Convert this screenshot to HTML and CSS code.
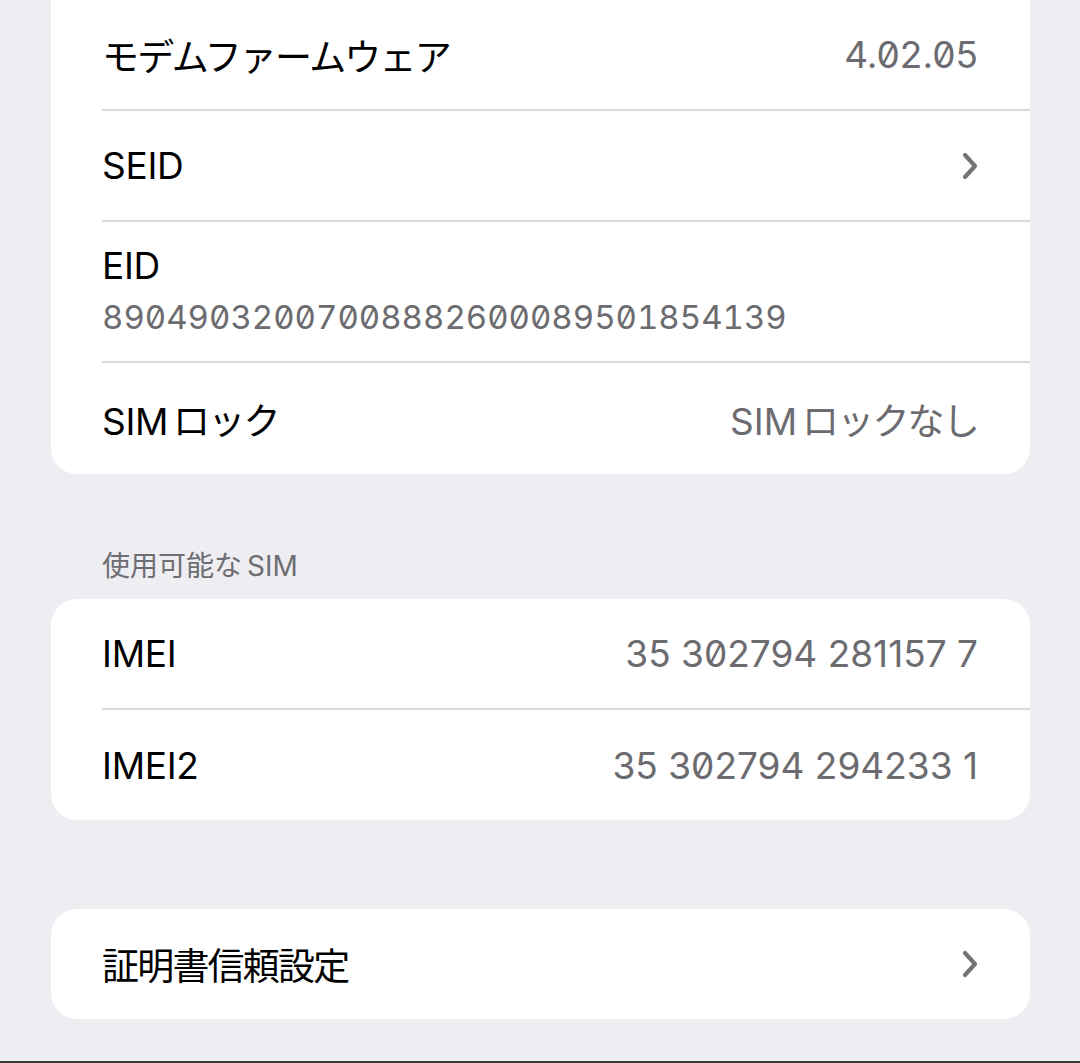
FILE: index.html
```html
<!DOCTYPE HTML>
<html>
	<head>
		<meta charset="utf-8">
		<title>
			情報
		</title>
		<meta name="viewport" content="width=device-width, initial-scale=1.0">
		<link rel="stylesheet" href="styles.css">
	</head>
	<body>
		<div class="group cut">
			<div class="row">
				<span class="label ja">モデムファームウェア</span>
				<span class="value">4.02.05</span>
			</div>
			<div class="row">
				<span class="label">SEID</span>
				<svg class="chev" width="16" height="28" viewBox="0 0 16 28"><path d="M3 3 L13 14 L3 25"/></svg>
			</div>
			<div class="row tall">
				<div class="stack">
					<span class="label">EID</span>
					<span class="sub">89049032007008882600089501854139</span>
				</div>
			</div>
			<div class="row">
				<span class="label">SIM<span class="ja">&thinsp;ロック</span></span>
				<span class="value">SIM<span class="ja">&thinsp;ロックなし</span></span>
			</div>
		</div>

		<div class="sectionTitle">使用可能な&thinsp;SIM</div>
		<div class="group">
			<div class="row">
				<span class="label">IMEI</span>
				<span class="value">35 302794 281157 7</span>
			</div>
			<div class="row">
				<span class="label">IMEI2</span>
				<span class="value">35 302794 294233 1</span>
			</div>
		</div>

		<div class="group lone">
			<div class="row">
				<span class="label ja">証明書信頼設定</span>
				<svg class="chev" width="16" height="28" viewBox="0 0 16 28"><path d="M3 3 L13 14 L3 25"/></svg>
			</div>
		</div>

		<div class="edge"></div>
	</body>
</html>
```

FILE: styles.css
```css
body {
	margin:0;
	background-color:#ededf2;
	color:#000;
	font-family:"Inter", "Noto Sans CJK JP", sans-serif;
	font-size:37px;
}

.group {
	background-color:white;
	margin-left:51px;
	margin-right:50px;
	border-radius:26px;
	overflow:hidden;
}
.cut {
	border-top-left-radius:0;
	border-top-right-radius:0;
}
.lone {
	margin-top:89px;
}

.row {
	display:flex;
	align-items:center;
	justify-content:space-between;
	box-sizing:border-box;
	height:111px;
	margin-left:51px;
	padding-right:52px;
	border-bottom:2px solid #dadade;
}
.row:last-child {
	border-bottom:none;
	height:110px;
}
.cut .row:last-child {
	height:111px;
}
.tall {
	height:141px;
}

.stack {
	display:flex;
	flex-direction:column;
}
.stack .label {
	line-height:50px;
}

.label {
	letter-spacing:-0.3px;
}
.ja {
	letter-spacing:-1.8px;
}
.value {
	color:#6c6c70;
	font-feature-settings:"zero" 1;
	letter-spacing:0;
}
.sub {
	color:#6c6c70;
	font-size:33px;
	line-height:52px;
	font-feature-settings:"zero" 1, "tnum" 1;
}

.chev {
	display:block;
}
.chev path {
	fill:none;
	stroke:#747478;
	stroke-width:4.2;
	stroke-linecap:round;
	stroke-linejoin:round;
}

.sectionTitle {
	color:#6d6d72;
	font-size:28px;
	line-height:36px;
	padding-left:102px;
	margin-top:74px;
	margin-bottom:15px;
}

.edge {
	margin-top:42px;
	height:2px;
	background-color:#3a3a3c;
}
```
